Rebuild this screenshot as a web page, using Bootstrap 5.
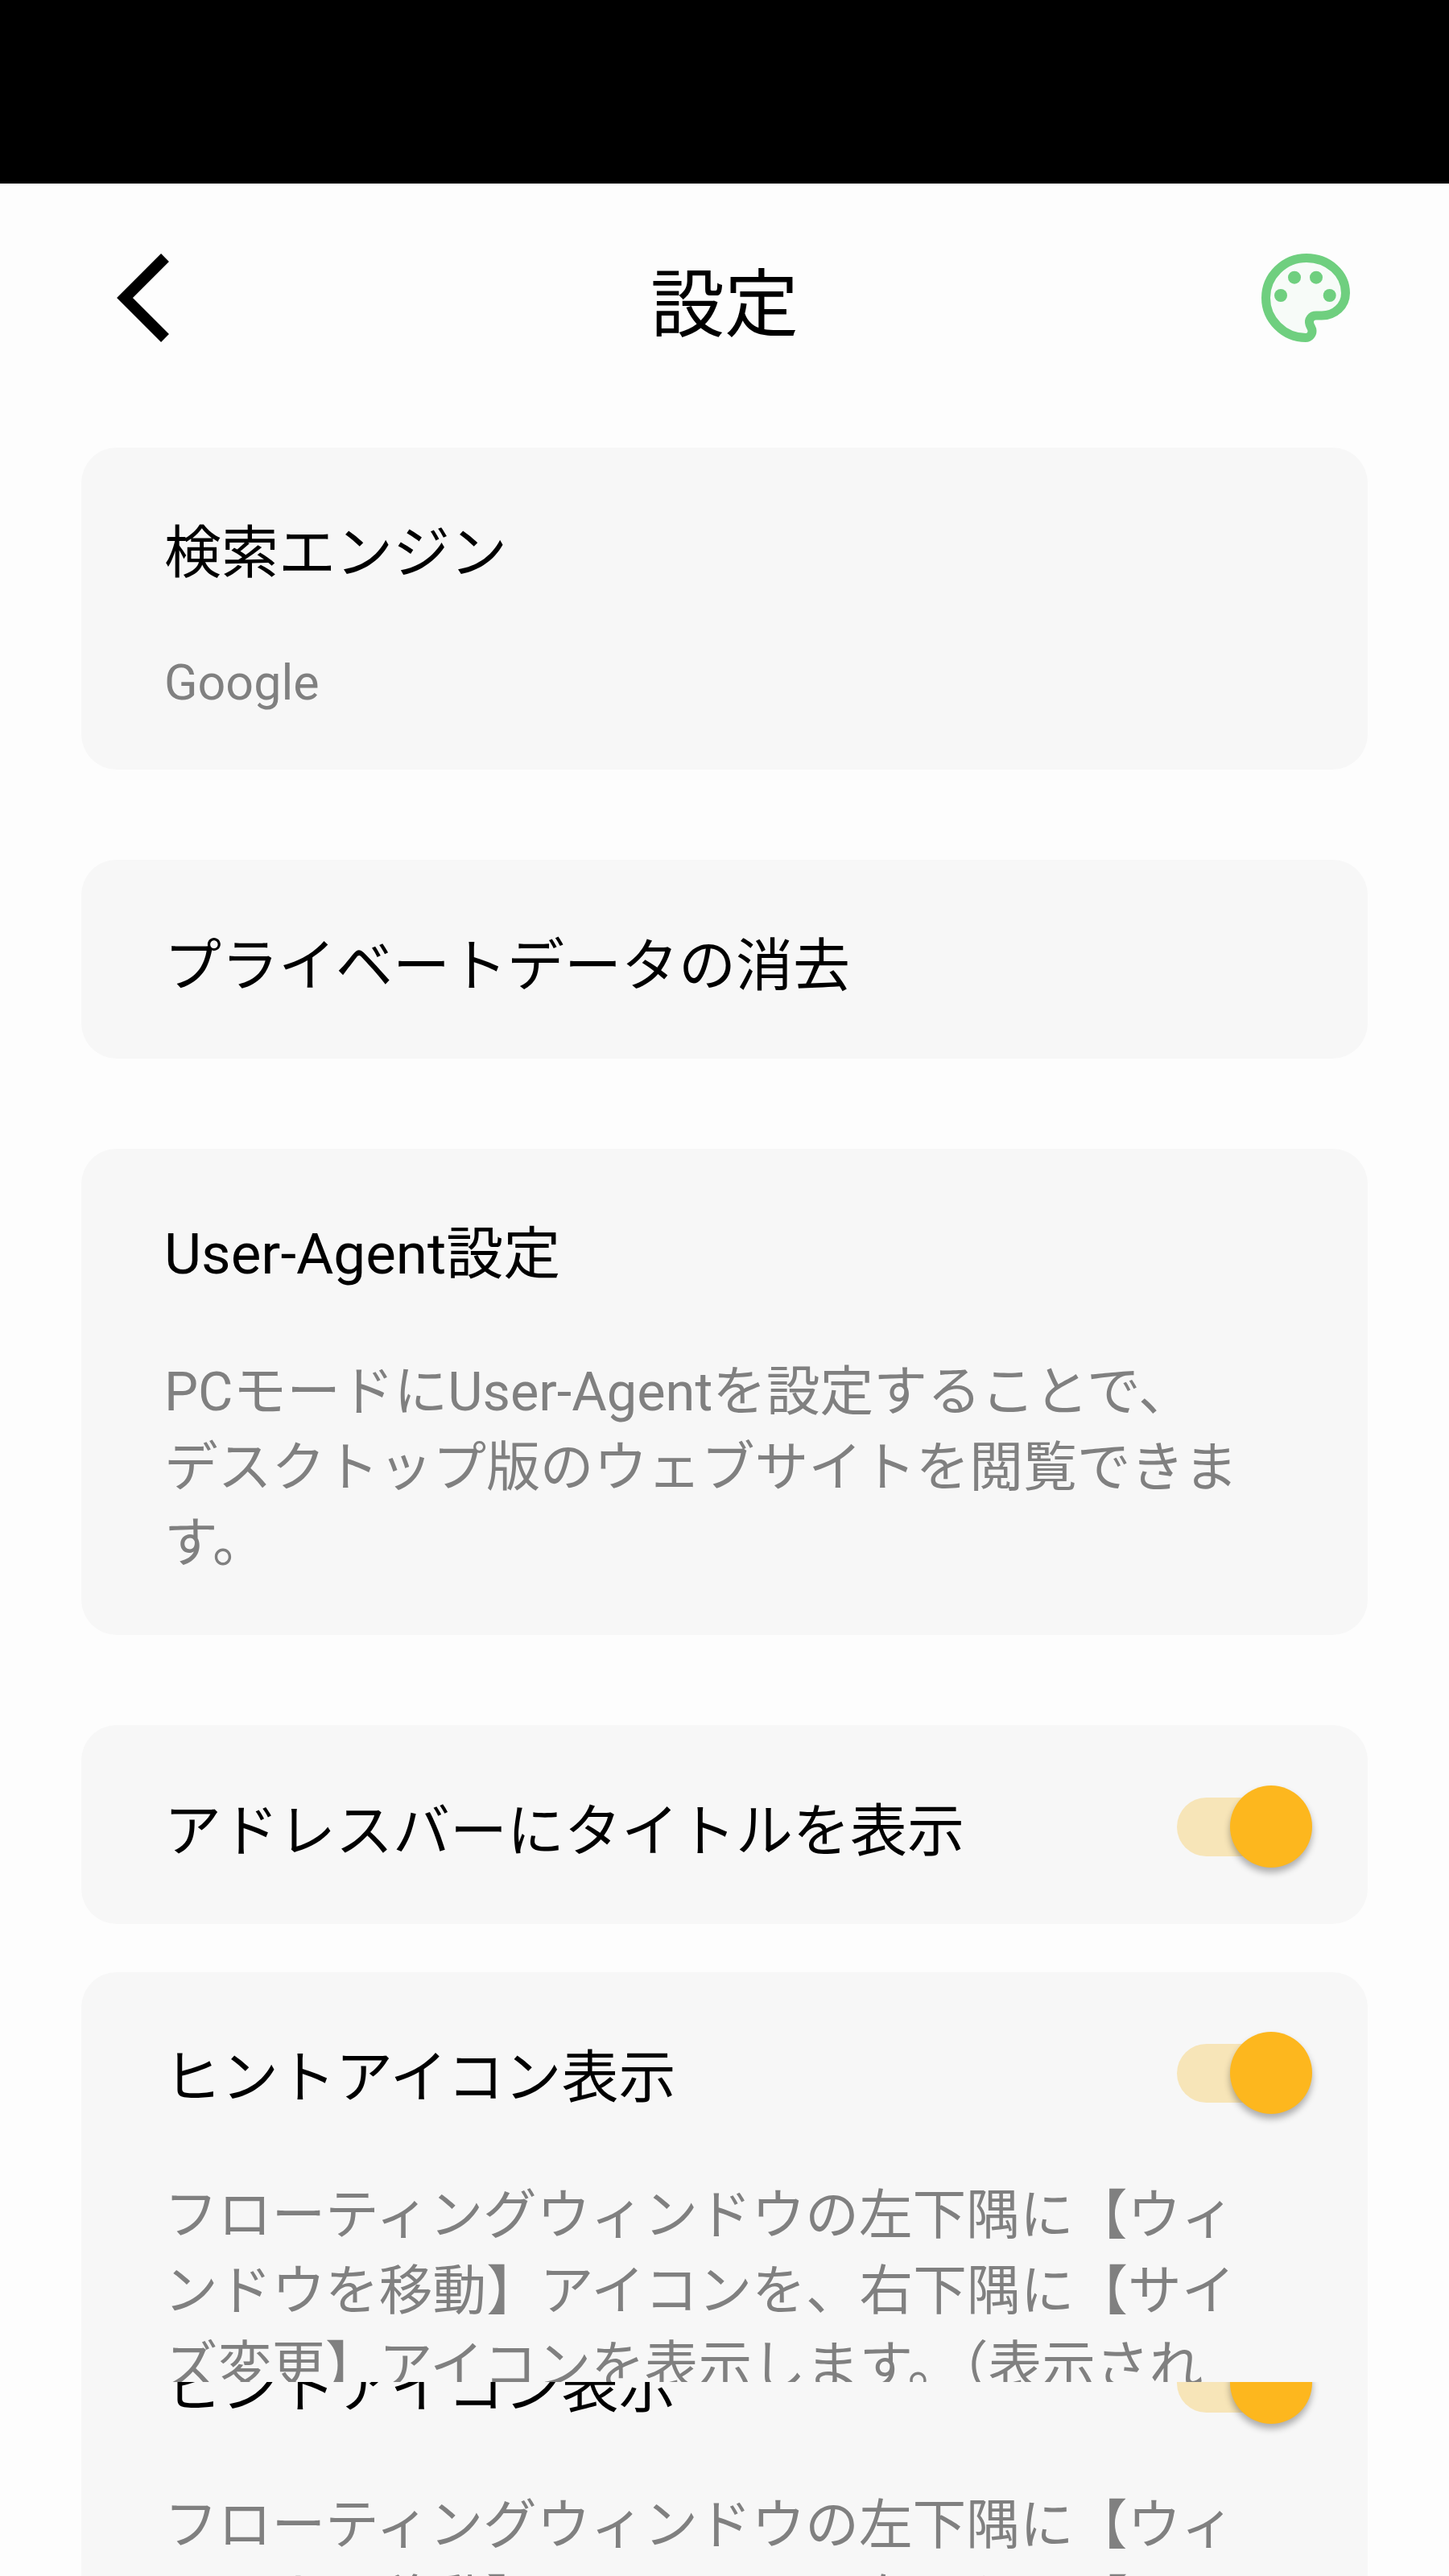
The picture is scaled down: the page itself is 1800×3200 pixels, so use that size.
<!DOCTYPE html>
<html lang="ja">
<head>
  <meta charset="UTF-8">
  <title>設定</title>
  <link href="https://cdn.jsdelivr.net/npm/bootstrap@5.3.2/dist/css/bootstrap.min.css" rel="stylesheet">
  <style>
    body { background: #fdfdfd; font-family: Roboto, "Noto Sans CJK JP", sans-serif; height: 3200px; overflow: hidden; color: #000; }
    .top-black { height: 228px; background: #000; }
    .pane-main { height: 2959px; overflow: hidden; }
    .pane-next { height: 241px; overflow: hidden; }
    .head-row { height: 328px; padding: 0 123px 44px 145px; }
    .head-title { font-size: 92px; line-height: 100px; margin-top: 20px; }
    .card-stack { padding: 0 101px; }
    .set-card { background: #f7f7f7; border-radius: 44px; padding: 75px 69px 61px 103px; }
    .set-card.gap-big { margin-bottom: 112px; }
    .set-card.gap-small { margin-bottom: 60px; }
    .set-card.one-line { padding-top: 76px; padding-bottom: 71px; }
    .set-title { font-size: 71px; line-height: 100px; height: 100px; padding-top: 6px; }
    .set-desc { font-size: 66.7px; line-height: 94px; color: #808080; margin: 80px 86px 6px 0; }
    .set-value { font-size: 61px; line-height: 94px; color: #808080; margin-top: 70px; }
    .sw-track { position: relative; width: 148px; height: 73px; margin-right: 20px; border-radius: 37px; background: #f7e5b8; flex-shrink: 0; }
    .sw-knob { position: absolute; right: -20px; top: -15px; width: 102px; height: 102px; border-radius: 50%; background: #fdb71e; box-shadow: 0 6px 8px rgba(0, 0, 0, .3); }
    .next-card { margin-top: -124px; }
  </style>
</head>
<body>
  <div class="pane-main">
    <div class="top-black"></div>

    <div class="head-row d-flex justify-content-between align-items-center">
      <svg width="88" height="114" viewBox="0 0 88 114" fill="none" stroke="#000" stroke-width="14" stroke-miterlimit="4">
        <path d="M60 7 L10 57 L60 107"/>
      </svg>
      <div class="head-title">設定</div>
      <svg width="110" height="110" viewBox="0 0 110 110" fill="#f7fbf8" stroke="#6fcf7f" stroke-width="11">
        <path d="M56 5.5 C28 5.5 5.5 28 5.5 55 C5.5 82 28 104.5 55 104.5 C60 104.5 63 100 63 96 C63 93 61 91 60 88 C58 82 62 77 68 77 H75 C91 77 104.5 65 104.5 49 C104.5 25 83 5.5 56 5.5 Z"/>
        <g fill="#6fcf7f" stroke="none">
          <circle cx="41" cy="29.7" r="8"/>
          <circle cx="68" cy="29.7" r="8"/>
          <circle cx="24" cy="52" r="8"/>
          <circle cx="84.7" cy="52" r="8"/>
        </g>
      </svg>
    </div>

    <div class="card-stack">
      <div class="set-card gap-big">
        <div class="set-title">検索エンジン</div>
        <div class="set-value">Google</div>
      </div>

      <div class="set-card one-line gap-big">
        <div class="set-title">プライベートデータの消去</div>
      </div>

      <div class="set-card gap-big">
        <div class="set-title">User-Agent設定</div>
        <div class="set-desc">PCモードにUser-Agentを設定することで、デスクトップ版のウェブサイトを閲覧できます。</div>
      </div>

      <div class="set-card one-line gap-small d-flex justify-content-between align-items-center">
        <div class="set-title">アドレスバーにタイトルを表示</div>
        <div class="sw-track"><div class="sw-knob"></div></div>
      </div>

      <div class="set-card">
        <div class="d-flex justify-content-between align-items-center">
          <div class="set-title">ヒントアイコン表示</div>
          <div class="sw-track"><div class="sw-knob"></div></div>
        </div>
        <div class="set-desc">フローティングウィンドウの左下隅に【ウィンドウを移動】アイコンを、右下隅に【サイズ変更】アイコンを表示します。（表示されない場合があります）</div>
      </div>
    </div>
  </div>

  <div class="pane-next card-stack">
    <div class="set-card next-card">
      <div class="d-flex justify-content-between align-items-center">
        <div class="set-title">ヒントアイコン表示</div>
        <div class="sw-track"><div class="sw-knob"></div></div>
      </div>
      <div class="set-desc">フローティングウィンドウの左下隅に【ウィンドウを移動】アイコンを、右下隅に【サイズ変更】アイコンを表示します。（表示されない場合があります）</div>
    </div>
  </div>

  <script src="https://cdn.jsdelivr.net/npm/bootstrap@5.3.2/dist/js/bootstrap.bundle.min.js"></script>
</body>
</html>
